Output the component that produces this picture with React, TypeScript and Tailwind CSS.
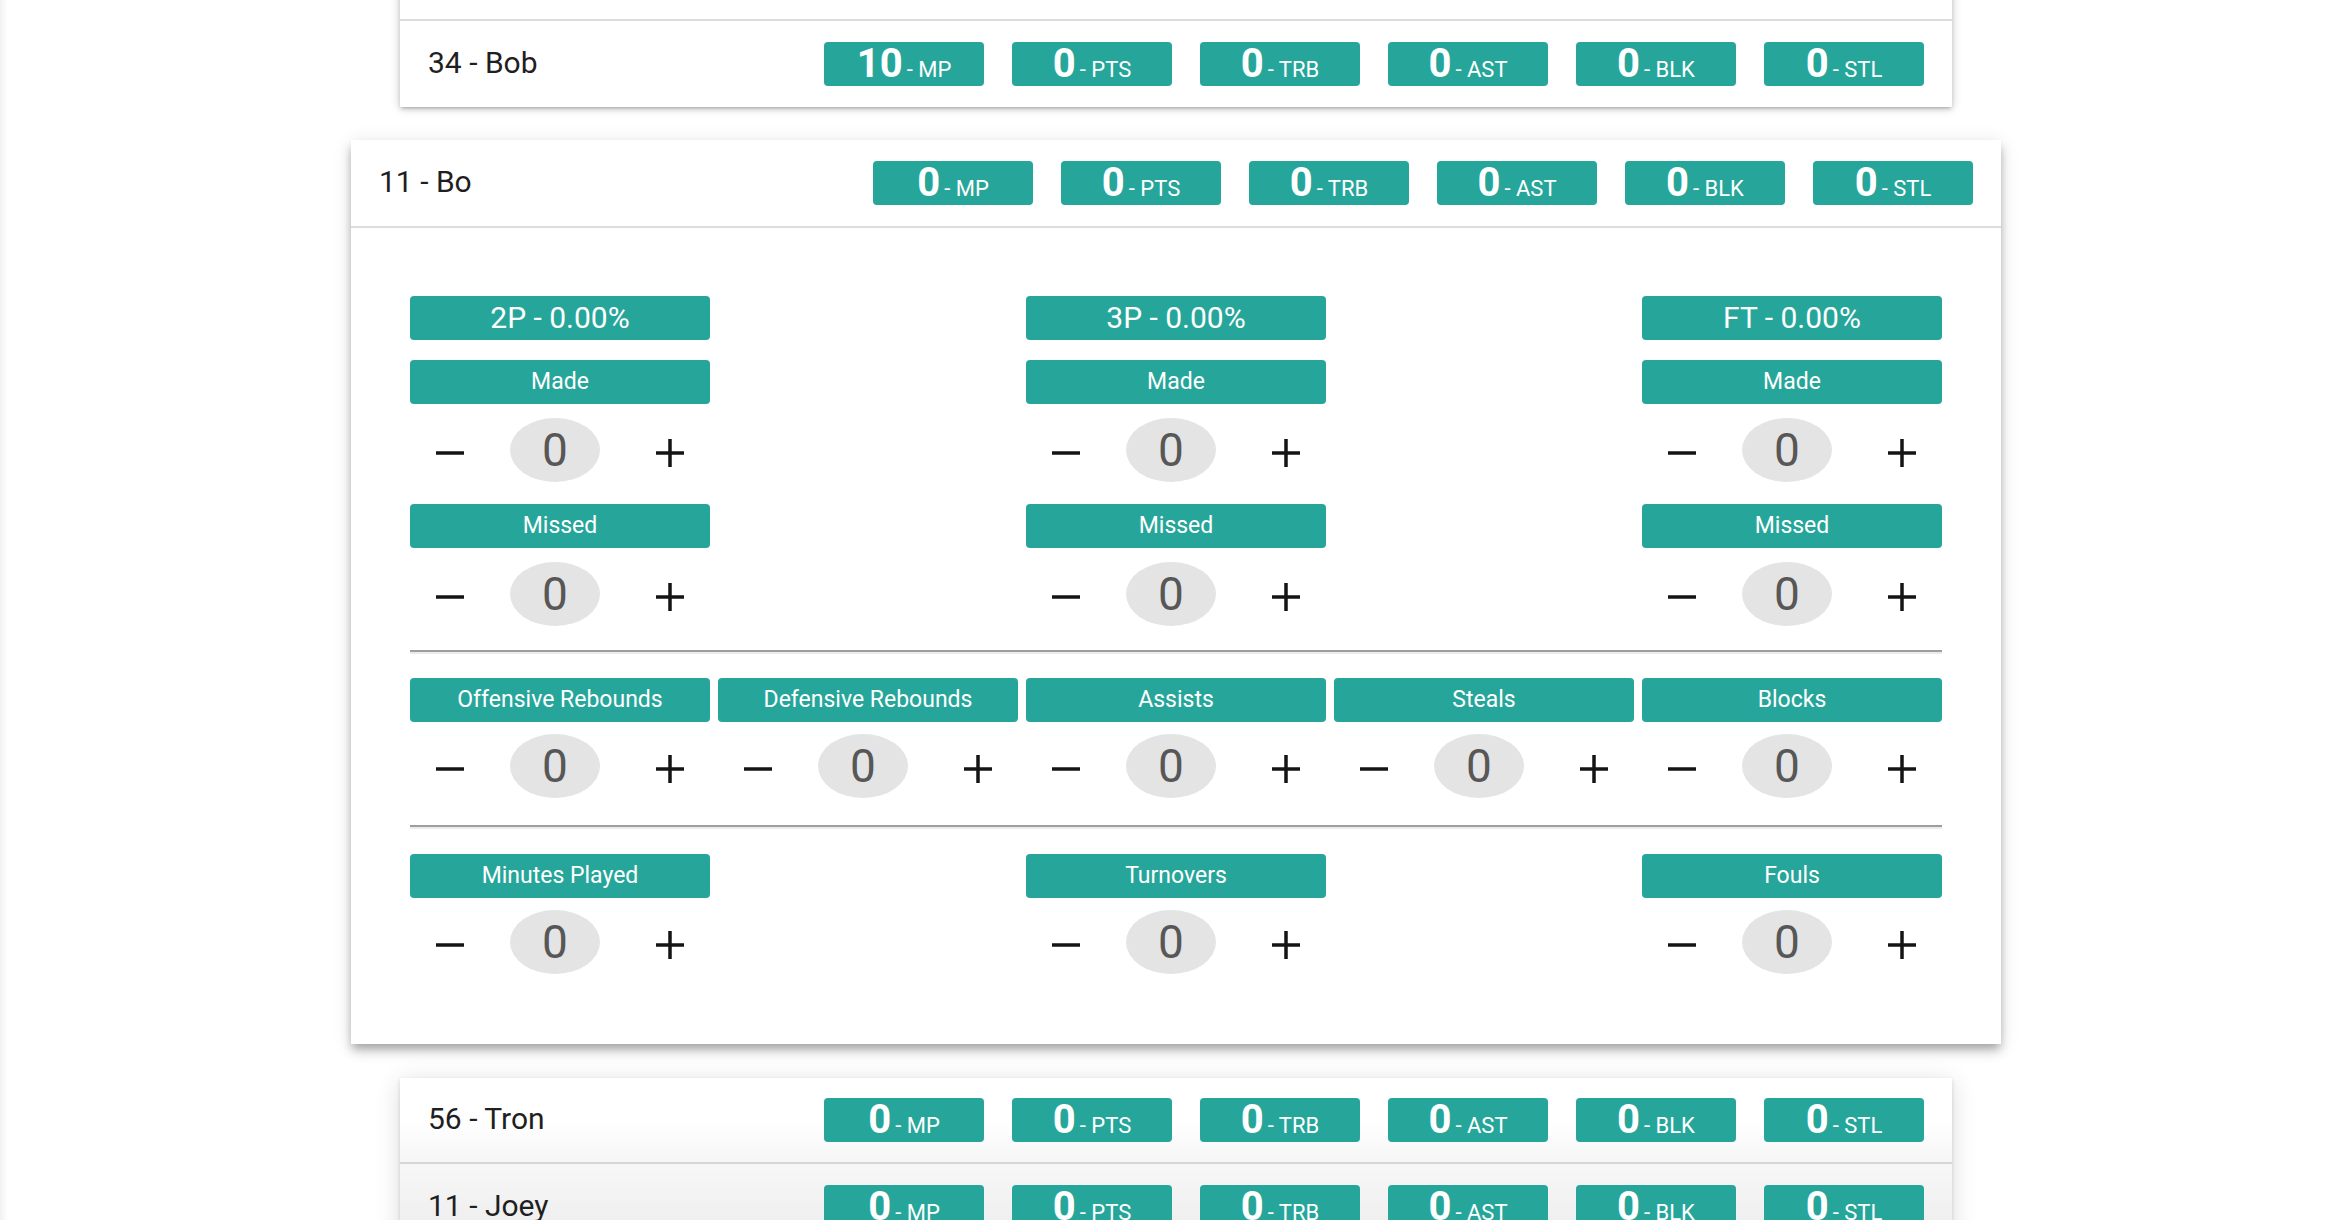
import React from "react";

type Stats = { mp: number; pts: number; trb: number; ast: number; blk: number; stl: number };

const zero: Stats = { mp: 0, pts: 0, trb: 0, ast: 0, blk: 0, stl: 0 };

function StatBadge({ value, label }: { value: number; label: string }) {
  return (
    <div className="flex h-[44px] w-[160px] items-baseline justify-center rounded-[4px] bg-[#26a69a] pt-[2px] text-white">
      <span className="text-[40px] font-bold leading-none">{value}</span>
      <span className="ml-[4px] text-[22px] leading-none">- {label}</span>
    </div>
  );
}

function HeaderContent({ title, stats }: { title: string; stats: Stats }) {
  return (
    <>
      <div className="pb-[4px] text-[30px] text-[#1f1f1f]">{title}</div>
      <div className="flex gap-[28px]">
        <StatBadge value={stats.mp} label="MP" />
        <StatBadge value={stats.pts} label="PTS" />
        <StatBadge value={stats.trb} label="TRB" />
        <StatBadge value={stats.ast} label="AST" />
        <StatBadge value={stats.blk} label="BLK" />
        <StatBadge value={stats.stl} label="STL" />
      </div>
    </>
  );
}

function MinusIcon() {
  return (
    <svg width="28" height="28" viewBox="0 0 28 28" className="mt-[5px] shrink-0">
      <line x1="0" y1="14" x2="28" y2="14" stroke="#141414" strokeWidth="3.5" />
    </svg>
  );
}

function PlusIcon() {
  return (
    <svg width="28" height="28" viewBox="0 0 28 28" className="mt-[6px] shrink-0">
      <line x1="0" y1="14" x2="28" y2="14" stroke="#141414" strokeWidth="3.5" />
      <line x1="14" y1="0" x2="14" y2="28" stroke="#141414" strokeWidth="3.5" />
    </svg>
  );
}

function Counter({ top }: { top: "a" | "b" }) {
  return (
    <div className={`flex h-[64px] items-center ${top === "a" ? "mt-[14px]" : "mt-[12px]"}`}>
      <div className="ml-[26px] flex">
        <MinusIcon />
      </div>
      <div className="ml-[46px] flex h-[64px] w-[90px] shrink-0 items-center justify-center rounded-[50%] bg-[#e4e4e4] text-[46px] leading-none text-[#575757]">
        0
      </div>
      <div className="ml-[56px] flex">
        <PlusIcon />
      </div>
    </div>
  );
}

function Label({ children, big }: { children: React.ReactNode; big?: boolean }) {
  return (
    <div
      className={`h-[44px] w-full rounded-[4px] bg-[#26a69a] text-center leading-[44px] text-white ${
        big ? "text-[30px]" : "text-[23px]"
      }`}
    >
      {children}
    </div>
  );
}

function ShotGroup({ title, col }: { title: string; col: string }) {
  return (
    <div className={col}>
      <Label big>{title}</Label>
      <div className="mt-[20px]">
        <Label>Made</Label>
      </div>
      <Counter top="a" />
      <div className="mt-[22px]">
        <Label>Missed</Label>
      </div>
      <Counter top="a" />
    </div>
  );
}

function SimpleGroup({ title, col }: { title: string; col: string }) {
  return (
    <div className={col}>
      <Label>{title}</Label>
      <Counter top="b" />
    </div>
  );
}

function Divider() {
  return <div className="h-[4px] w-full border-t-2 border-b-2 border-t-[#9e9e9e] border-b-[#ececec]" />;
}

export default function App() {
  return (
    <div className="relative min-h-screen overflow-hidden bg-white font-['Roboto','Liberation_Sans',sans-serif]">
      <div className="pointer-events-none absolute left-0 top-0 h-full w-[8px] bg-linear-to-r from-[rgba(0,0,0,0.05)] to-transparent" />

      {/* First card (scrolled partially off the top) */}
      <div className="mx-auto mt-[-65px] w-[1552px] bg-white shadow-[0_2px_4px_rgba(0,0,0,0.14),0_3px_2px_-2px_rgba(0,0,0,0.12),0_1px_10px_rgba(0,0,0,0.2)]">
        <div className="h-[86px] border-b-2 border-[#dddddd]" />
        <div className="flex h-[86px] items-center justify-between px-[28px]">
          <HeaderContent title="34 - Bob" stats={{ ...zero, mp: 10 }} />
        </div>
      </div>

      {/* Expanded card */}
      <div className="mx-auto mt-[33px] w-[1650px] bg-white shadow-[0_8px_10px_rgba(0,0,0,0.14),0_3px_18px_rgba(0,0,0,0.12),0_5px_8px_-2px_rgba(0,0,0,0.2)]">
        <div className="flex h-[88px] items-center justify-between border-b-2 border-[#dddddd] px-[28px]">
          <HeaderContent title="11 - Bo" stats={zero} />
        </div>
        <div className="px-[59px] pb-[70px] pt-[68px]">
          <div className="grid grid-cols-5 gap-x-[8px]">
            <ShotGroup title="2P - 0.00%" col="col-start-1" />
            <ShotGroup title="3P - 0.00%" col="col-start-3" />
            <ShotGroup title="FT - 0.00%" col="col-start-5" />
          </div>
          <div className="mt-[24px]">
            <Divider />
          </div>
          <div className="mt-[24px] grid grid-cols-5 gap-x-[8px]">
            <SimpleGroup title="Offensive Rebounds" col="col-start-1" />
            <SimpleGroup title="Defensive Rebounds" col="col-start-2" />
            <SimpleGroup title="Assists" col="col-start-3" />
            <SimpleGroup title="Steals" col="col-start-4" />
            <SimpleGroup title="Blocks" col="col-start-5" />
          </div>
          <div className="mt-[27px]">
            <Divider />
          </div>
          <div className="mt-[25px] grid grid-cols-5 gap-x-[8px]">
            <SimpleGroup title="Minutes Played" col="col-start-1" />
            <SimpleGroup title="Turnovers" col="col-start-3" />
            <SimpleGroup title="Fouls" col="col-start-5" />
          </div>
        </div>
      </div>

      {/* Following card */}
      <div className="mx-auto mt-[34px] w-[1552px] bg-white shadow-[0_2px_4px_rgba(0,0,0,0.14),0_3px_2px_-2px_rgba(0,0,0,0.12),0_4px_24px_rgba(0,0,0,0.14)]">
        <div className="flex h-[86px] items-center justify-between border-b-2 border-[#d6d6d6] bg-linear-to-b from-white from-50% to-[#f6f6f6] px-[28px]">
          <HeaderContent title="56 - Tron" stats={zero} />
        </div>
        <div className="flex h-[86px] items-center justify-between bg-linear-to-b from-[#f7f7f7] to-[#ebebeb] px-[28px]">
          <HeaderContent title="11 - Joey" stats={zero} />
        </div>
      </div>
    </div>
  );
}
